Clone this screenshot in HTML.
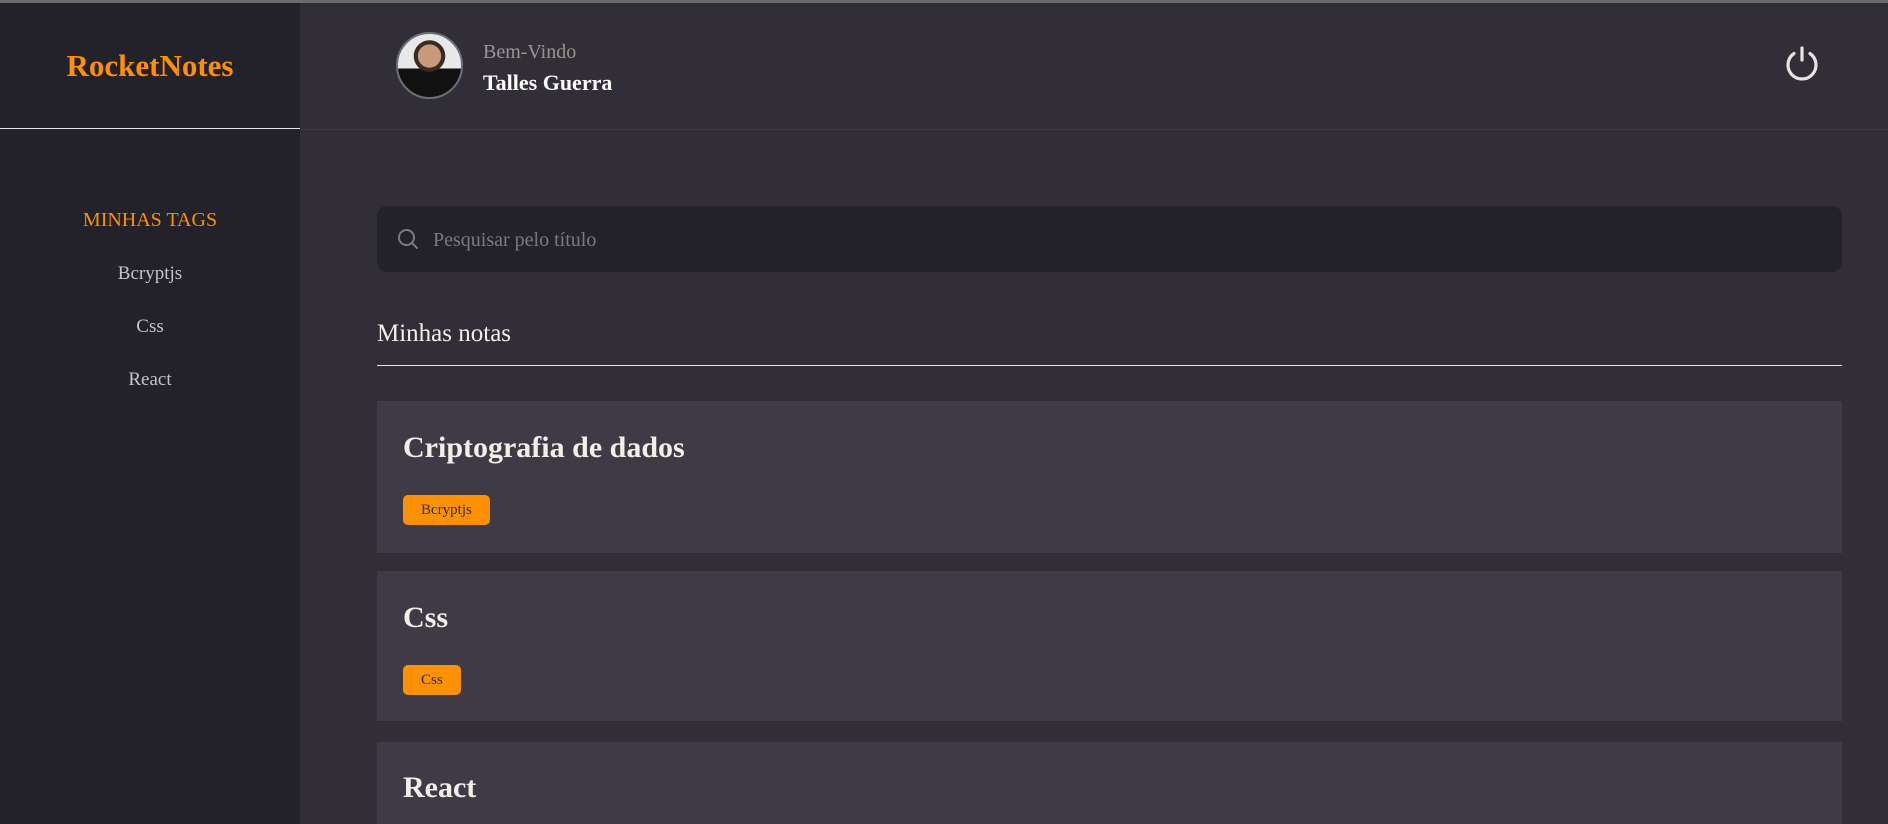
<!DOCTYPE html>
<html style="overflow:hidden;width:1888px;height:824px"><head><style>
*{margin:0;padding:0;box-sizing:border-box}
body{width:1888px;height:824px;overflow:hidden;background:#312e38;font-family:"Liberation Serif",serif;position:relative}
.top{position:absolute;left:0;top:0;width:1888px;height:3px;background:#6b6b6b}
.side{position:absolute;left:0;top:3px;width:300px;height:821px;background:#232129}
.brand{height:126px;border-bottom:1px solid #e8e8e8;display:flex;align-items:center;justify-content:center;color:#ff9000;font-weight:bold;font-size:31px}
.tags{text-align:center;font-size:19px;color:#c4c4cc}
.hdr{position:absolute;left:300px;top:3px;right:0;height:127px;border-bottom:1px solid #3e3b47}
.av{position:absolute;left:396px;top:32px;width:67px;height:67px;border-radius:50%;background:radial-gradient(circle at 50% 35%,#c99a7a 0 22%,#3a2a22 23% 30%,transparent 31%),linear-gradient(#e8e8e8 0 55%,#111 55%);border:2px solid #6a7078}
.t{position:absolute;white-space:nowrap}
.search{position:absolute;left:377px;top:206px;width:1465px;height:66px;background:#232129;border-radius:10px}
.card{position:absolute;left:377px;width:1465px;background:#3e3b47}
.card h2{position:absolute;left:26px;font-size:30px;color:#f4ede8;font-weight:bold}
.tag{position:absolute;left:26px;height:30px;padding:0 18px;background:#ff9000;border-radius:5px;font-size:15px;color:#312e38;line-height:30px}
</style></head><body>
<div class="top"></div>
<div class="side">
<div class="brand">RocketNotes</div>
</div>
<div class="t" style="left:0;width:300px;text-align:center;top:209px;font-size:20px;color:#ff9000">MINHAS TAGS</div>
<div class="t tags" style="left:0;width:300px;top:263px">Bcryptjs</div>
<div class="t tags" style="left:0;width:300px;top:316px">Css</div>
<div class="t tags" style="left:0;width:300px;top:369px">React</div>
<div class="hdr"></div>
<div class="av"></div>
<div class="t" style="left:483px;top:41px;font-size:20px;color:#999591">Bem-Vindo</div>
<div class="t" style="left:483px;top:70px;font-size:22px;color:#fff;font-weight:bold">Talles Guerra</div>
<svg style="position:absolute;left:1782px;top:44px" width="40" height="40" viewBox="0 0 40 40" fill="none" stroke="#e8e4e0" stroke-width="3.2" stroke-linecap="round"><path d="M20 4v12"/><path d="M12 9.5A14 14 0 1 0 28 9.5"/></svg>
<div class="search">
<svg style="position:absolute;left:20px;top:22px" width="22" height="22" viewBox="0 0 22 22" fill="none" stroke="#7c7a80" stroke-width="2" stroke-linecap="round"><circle cx="9.5" cy="9.5" r="7.5"/><path d="M15 15l5 5"/></svg>
<div class="t" style="left:56px;top:23px;font-size:20px;color:#7c7a80">Pesquisar pelo título</div>
</div>
<div class="t" style="left:377px;top:320px;font-size:25px;color:#f4ede8">Minhas notas</div>
<div style="position:absolute;left:377px;top:365px;width:1465px;height:1px;background:#e8e8e8"></div>
<div class="card" style="top:401px;height:152px"><h2 style="top:30px">Criptografia de dados</h2><div class="tag" style="top:94px">Bcryptjs</div></div>
<div class="card" style="top:571px;height:150px"><h2 style="top:30px">Css</h2><div class="tag" style="top:94px">Css</div></div>
<div class="card" style="top:742px;height:82px"><h2 style="top:29px">React</h2></div>
</body></html>
